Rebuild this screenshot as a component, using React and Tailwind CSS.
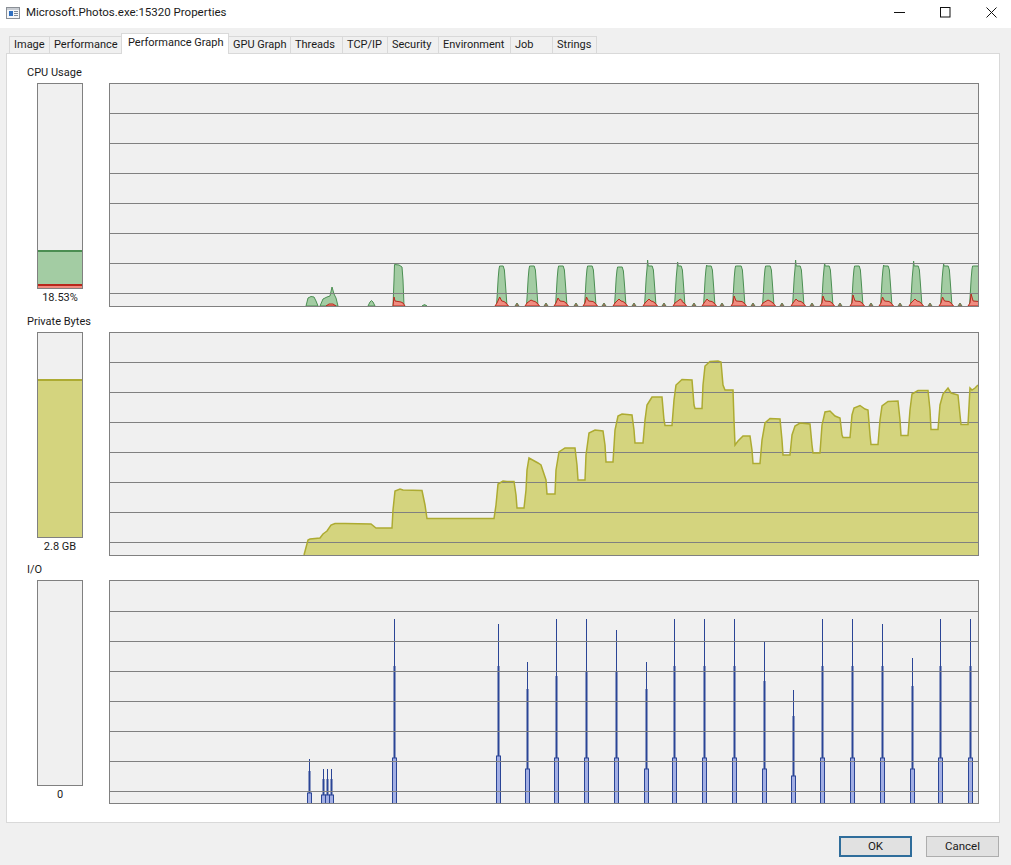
const tabs = [
  { name: "Image", w: "w-[41px]" },
  { name: "Performance", w: "w-[72px]" },
  { name: "Performance Graph", w: "w-[108px]", active: true },
  { name: "GPU Graph", w: "w-[62px]" },
  { name: "Threads", w: "w-[52px]" },
  { name: "TCP/IP", w: "w-[45px]" },
  { name: "Security", w: "w-[51px]" },
  { name: "Environment", w: "w-[72px]" },
  { name: "Job", w: "w-[42px]" },
  { name: "Strings", w: "w-[44px]" },
];

// chart points are in screen coordinates, the viewBox takes care of the offset
// x0, x1, top of green, top of red, where the red bump peaks (0-1), spike above the top
const cpuPeaks = [
  [497, 506, 266, 297, 0.3, 0],
  [527, 537, 266, 300, 0.4, 0],
  [556, 566, 266, 298, 0.2, 0],
  [585, 595, 266, 297, 0.15, 0],
  [615, 625, 267, 299, 0.4, 0],
  [645, 655, 266, 299, 0.4, 6],
  [675, 684, 266, 299, 0.6, 4],
  [704, 714, 266, 299, 0.3, 1],
  [733, 744, 266, 296, 0.1, 0],
  [763, 773, 266, 300, 0.5, 0],
  [793, 803, 266, 299, 0.3, 6],
  [822, 832, 266, 296, 0.1, 3],
  [852, 862, 266, 295, 0.1, 0],
  [881, 891, 266, 297, 0.15, 1],
  [911, 921, 266, 299, 0.4, 5],
  [941, 951, 266, 297, 0.15, 2],
  [970, 981, 266, 294, 0.1, 0],
];

const cpuBumps = [517, 546, 576, 604, 634, 664, 694, 722, 753, 782, 812, 840, 871, 900, 930, 960];

const bytesLine =
  "304,555 308,540 310,539 320,538 323,534 327,531 331,525 335,523.5 345,523.5 371,524 376,528 392,528 393,510 395,491 400,489 403,490 422,490.5 425,505 427,518.5 494,518.5 496,505 498,484 503,481 507,481.5 514,481.5 516,495 517,508 524,508 526,490 527,470 529,458 538,463 541,465 546,480 547,494 555,494 556,470 559,452 565,448 575,448 577,465 578,480 585,480 586,455 589,433 595,430 603,431 605,445 606,462 613,462 615,430 618,416 622,414 632,415 634,430 635,443 643,443 645,420 647,405 652,397 662,397 664,420 665,425.5 672,425.5 674,400 676,385 682,379.5 692,380 694,405 695,408.5 702,408.5 703,385 705,366 710,361.5 718,361 721,362 723,385 725,390 733,390 734,420 735,445 738,441 743,436 750,436 752,450 753,463.5 760,463.5 762,440 765,423 770,418.5 780,419 782,440 783,455 790,455 792,435 795,426 800,423 810,424 812,445 813,453 820,453 822,425 825,412 830,411 835,416 840,418 842,435 843,437.5 850,437.5 852,415 854,408 860,405.5 865,409 868,410 870,435 871,444.5 878,444.5 880,420 882,406 888,401.5 898,401 900,420 901,435.5 908,435.5 910,410 912,394 918,390.5 928,390.5 930,410 931,429.5 938,429.5 940,405 943,394 948,388 951,393 958,395 960,415 961,424.5 968,424.5 970,388 972,390 975,388 978,385";

// x, top, y where it gets wider, y where it is widest
const ioSpikes = [
  [309, 758, 770, 792],
  [323, 768, 778, 794],
  [327, 768, 778, 794],
  [331, 768, 778, 794],
  [394, 618, 665, 757],
  [498, 623, 665, 755],
  [527, 661, 688, 768],
  [556, 618, 675, 757],
  [586, 618, 670, 757],
  [616, 629, 670, 757],
  [646, 661, 688, 768],
  [674, 618, 665, 757],
  [704, 618, 665, 757],
  [734, 618, 665, 757],
  [764, 641, 680, 768],
  [793, 689, 715, 775],
  [822, 618, 665, 757],
  [852, 618, 665, 757],
  [882, 623, 665, 757],
  [912, 657, 685, 768],
  [940, 618, 665, 757],
  [970, 618, 665, 757],
];

function gridLines(start) {
  return [0, 1, 2, 3, 4, 5, 6].map((i) => start + i * 30 + 0.5);
}

function greenPeak([x0, x1, top, , , spike]) {
  const pts = [
    [x0 - 0.5, 306],
    [x0 + 0.5, 290],
    [x0 + 1.2, 278],
    [x0 + 2, top + 3],
    [x0 + 2.6, top - spike],
    [x0 + 3.2, top],
    [x1 - 2.8, top],
    [x1 - 1.6, top + 4],
    [x1 - 0.5, 285],
    [x1 + 1, 306],
  ];
  return pts.map((p) => p.join(",")).join(" ");
}

function redPeak([x0, x1, , red, at]) {
  const px = x0 + (x1 - x0) * at;
  const pts = [
    [x0 - 2, 306],
    [x0, 303],
    [px, red],
    [px + 2, 301],
    [x1 - 2, 301.5],
    [x1, 303],
    [x1 + 2.5, 306],
  ];
  return pts.map((p) => p.join(",")).join(" ");
}

function Frame({ x, y, children }) {
  return (
    <div className="w-[870px] h-[224px] border border-[#808080] bg-[#f0f0f0]">
      <svg width="868" height="222" viewBox={`${x} ${y} 868 222`} className="block">
        {children}
      </svg>
    </div>
  );
}

function Lines({ start }) {
  return gridLines(start).map((y) => (
    <line key={y} x1="109" x2="979" y1={y} y2={y} stroke="#808080" strokeWidth="1" />
  ));
}

function CpuChart() {
  const g = { fill: "#a3cca3", stroke: "#4b8e52", strokeWidth: 1 };
  const r = { fill: "#f08c80", stroke: "#b8281c", strokeWidth: 1 };
  return (
    <Frame x={110} y={84}>
      <polygon points="306,306 308,298 311,296.5 314,297 316,301 318,306" {...g} />
      <polygon points="320,306 323,299 327,297 330,296 332,287 334,294 336,298 338,306" {...g} />
      <polygon points="368,306 370,302 371.5,300.5 373,302 375,306" {...g} />
      <polygon points="393,306 394,280 394.5,264.5 399,265 402,267 403,280 404,306" {...g} />
      <polygon points="422,306 424.5,304.5 427,306" {...g} />
      {cpuPeaks.map((p) => (
        <polygon key={p[0]} points={greenPeak(p)} {...g} />
      ))}
      <polygon points="326,306 329,304 333,304 336,306" {...r} />
      <polygon points="393,306 394,297 395,301 401,302 403,303 405,306" {...r} />
      {cpuPeaks.map((p) => (
        <polygon key={p[0]} points={redPeak(p)} {...r} />
      ))}
      {cpuBumps.map((x) => (
        <polygon key={x} points={`${x - 2},306 ${x},303 ${x + 2},306`} fill="#c0635c" stroke="#5f7f50" strokeWidth="1" />
      ))}
      <Lines start={113} />
    </Frame>
  );
}

function BytesChart() {
  return (
    <Frame x={110} y={333}>
      <polygon points={`${bytesLine} 978,556 304,556`} fill="#d4d47e" />
      <Lines start={362} />
      <polyline points={bytesLine} fill="none" stroke="#adab32" strokeWidth="1.5" />
    </Frame>
  );
}

function IoChart() {
  return (
    <Frame x={110} y={580}>
      {ioSpikes.map(([x, top, mid, low]) => (
        <g key={x}>
          <line x1={x + 0.5} x2={x + 0.5} y1={top} y2={mid} stroke="#2a4596" strokeWidth="1" />
          <rect x={x - 0.5} y={mid} width="2" height={low - mid} fill="#2a4596" />
          <rect x={x - 1.5} y={low} width="4" height={804 - low} fill="#a2aee4" stroke="#2a4596" strokeWidth="1" />
        </g>
      ))}
      <Lines start={610} />
    </Frame>
  );
}

function Meter({ value, children }) {
  return (
    <div className="flex flex-col items-center w-[46px]">
      <div className="w-[46px] h-[206px] border border-[#808080] bg-[#f0f0f0] flex flex-col justify-end">
        {children}
      </div>
      <div className="h-[18px] leading-[18px] whitespace-nowrap">{value}</div>
    </div>
  );
}

function Section({ label, meter, chart, className = "" }) {
  return (
    <div className={`flex flex-col ${className}`}>
      <div className="h-[18px] leading-[15px] pl-[20px]">{label}</div>
      <div className="flex pl-[30px] gap-[26px]">
        {meter}
        {chart}
      </div>
    </div>
  );
}

function WindowIcons() {
  return (
    <div className="flex items-center gap-[34px] pr-[14px]">
      <svg width="11" height="11" viewBox="0 0 11 11" className="mr-[1px]">
        <line x1="0" x2="11" y1="5.5" y2="5.5" stroke="#111" />
      </svg>
      <svg width="11" height="11" viewBox="0 0 11 11">
        <rect x="0.5" y="0.5" width="9.5" height="9.5" fill="none" stroke="#111" />
      </svg>
      <svg width="11" height="11" viewBox="0 0 11 11" className="ml-[1px]">
        <path d="M0.5 0.5L10.5 10.5M10.5 0.5L0.5 10.5" stroke="#111" fill="none" />
      </svg>
    </div>
  );
}

export default function App() {
  return (
    <div className="w-[1011px] h-[865px] bg-[#f0f0f0] flex flex-col text-[11px] text-[#1a1a1a] font-['Roboto',sans-serif] overflow-hidden">
      <div className="h-[28px] pb-[3px] bg-white flex items-center justify-between">
        <div className="flex items-center pl-[6px] gap-[6px] text-[11.5px]">
          <svg width="14" height="12" viewBox="0 0 14 12">
            <rect x="0.5" y="0.5" width="13" height="11" fill="#f4f6f8" stroke="#8a8f96" />
            <rect x="1" y="1" width="12" height="2" fill="#c8ccd2" />
            <rect x="3" y="4" width="4" height="5" fill="#2f6fc0" />
            <rect x="8" y="4" width="4" height="1" fill="#7f8a99" />
            <rect x="8" y="6" width="4" height="1" fill="#7f8a99" />
            <rect x="8" y="8" width="4" height="1" fill="#7f8a99" />
          </svg>
          <span>Microsoft.Photos.exe:15320 Properties</span>
        </div>
        <WindowIcons />
      </div>

      <div className="h-[26px] -mb-[1px] pl-[9px] flex items-end relative z-10">
        {tabs.map((t) => (
          <div
            key={t.name}
            className={
              t.active
                ? `${t.w} h-[21px] -ml-[1px] pl-[6px] bg-white border border-b-0 border-[#d9d9d9] leading-[18px] whitespace-nowrap`
                : `${t.w} h-[18px] pl-[4px] border border-l-0 first:border-l border-[#d9d9d9] leading-[16px] whitespace-nowrap`
            }
          >
            {t.name}
          </div>
        ))}
      </div>

      <div className="ml-[6px] w-[994px] h-[770px] bg-white border border-[#d9d9d9] pt-[11px] flex flex-col gap-[7px]">
        <Section
          label="CPU Usage"
          meter={
            <Meter value="18.53%">
              <div className="h-[34px] bg-[#a3cca3] border-t-2 border-[#4b8e52]" />
              <div className="h-[4px] bg-[#f08c80] border-t-2 border-[#b8281c]" />
            </Meter>
          }
          chart={<CpuChart />}
        />
        <Section
          label="Private Bytes"
          meter={
            <Meter value="2.8 GB">
              <div className="h-[158px] bg-[#d4d47e] border-t-2 border-[#adab32]" />
            </Meter>
          }
          chart={<BytesChart />}
        />
        <Section label="I/O" className="-mt-[1px]" meter={<Meter value="0" />} chart={<IoChart />} />
      </div>

      <div className="flex justify-end gap-[14px] pr-[12px] pt-[13px] text-[11.5px]">
        <div className="w-[73px] h-[21px] border-2 border-[#2f6d9b] bg-[#e1e1e1] flex items-center justify-center">OK</div>
        <div className="w-[73px] h-[21px] border border-[#adadad] bg-[#e1e1e1] flex items-center justify-center">Cancel</div>
      </div>
    </div>
  );
}
